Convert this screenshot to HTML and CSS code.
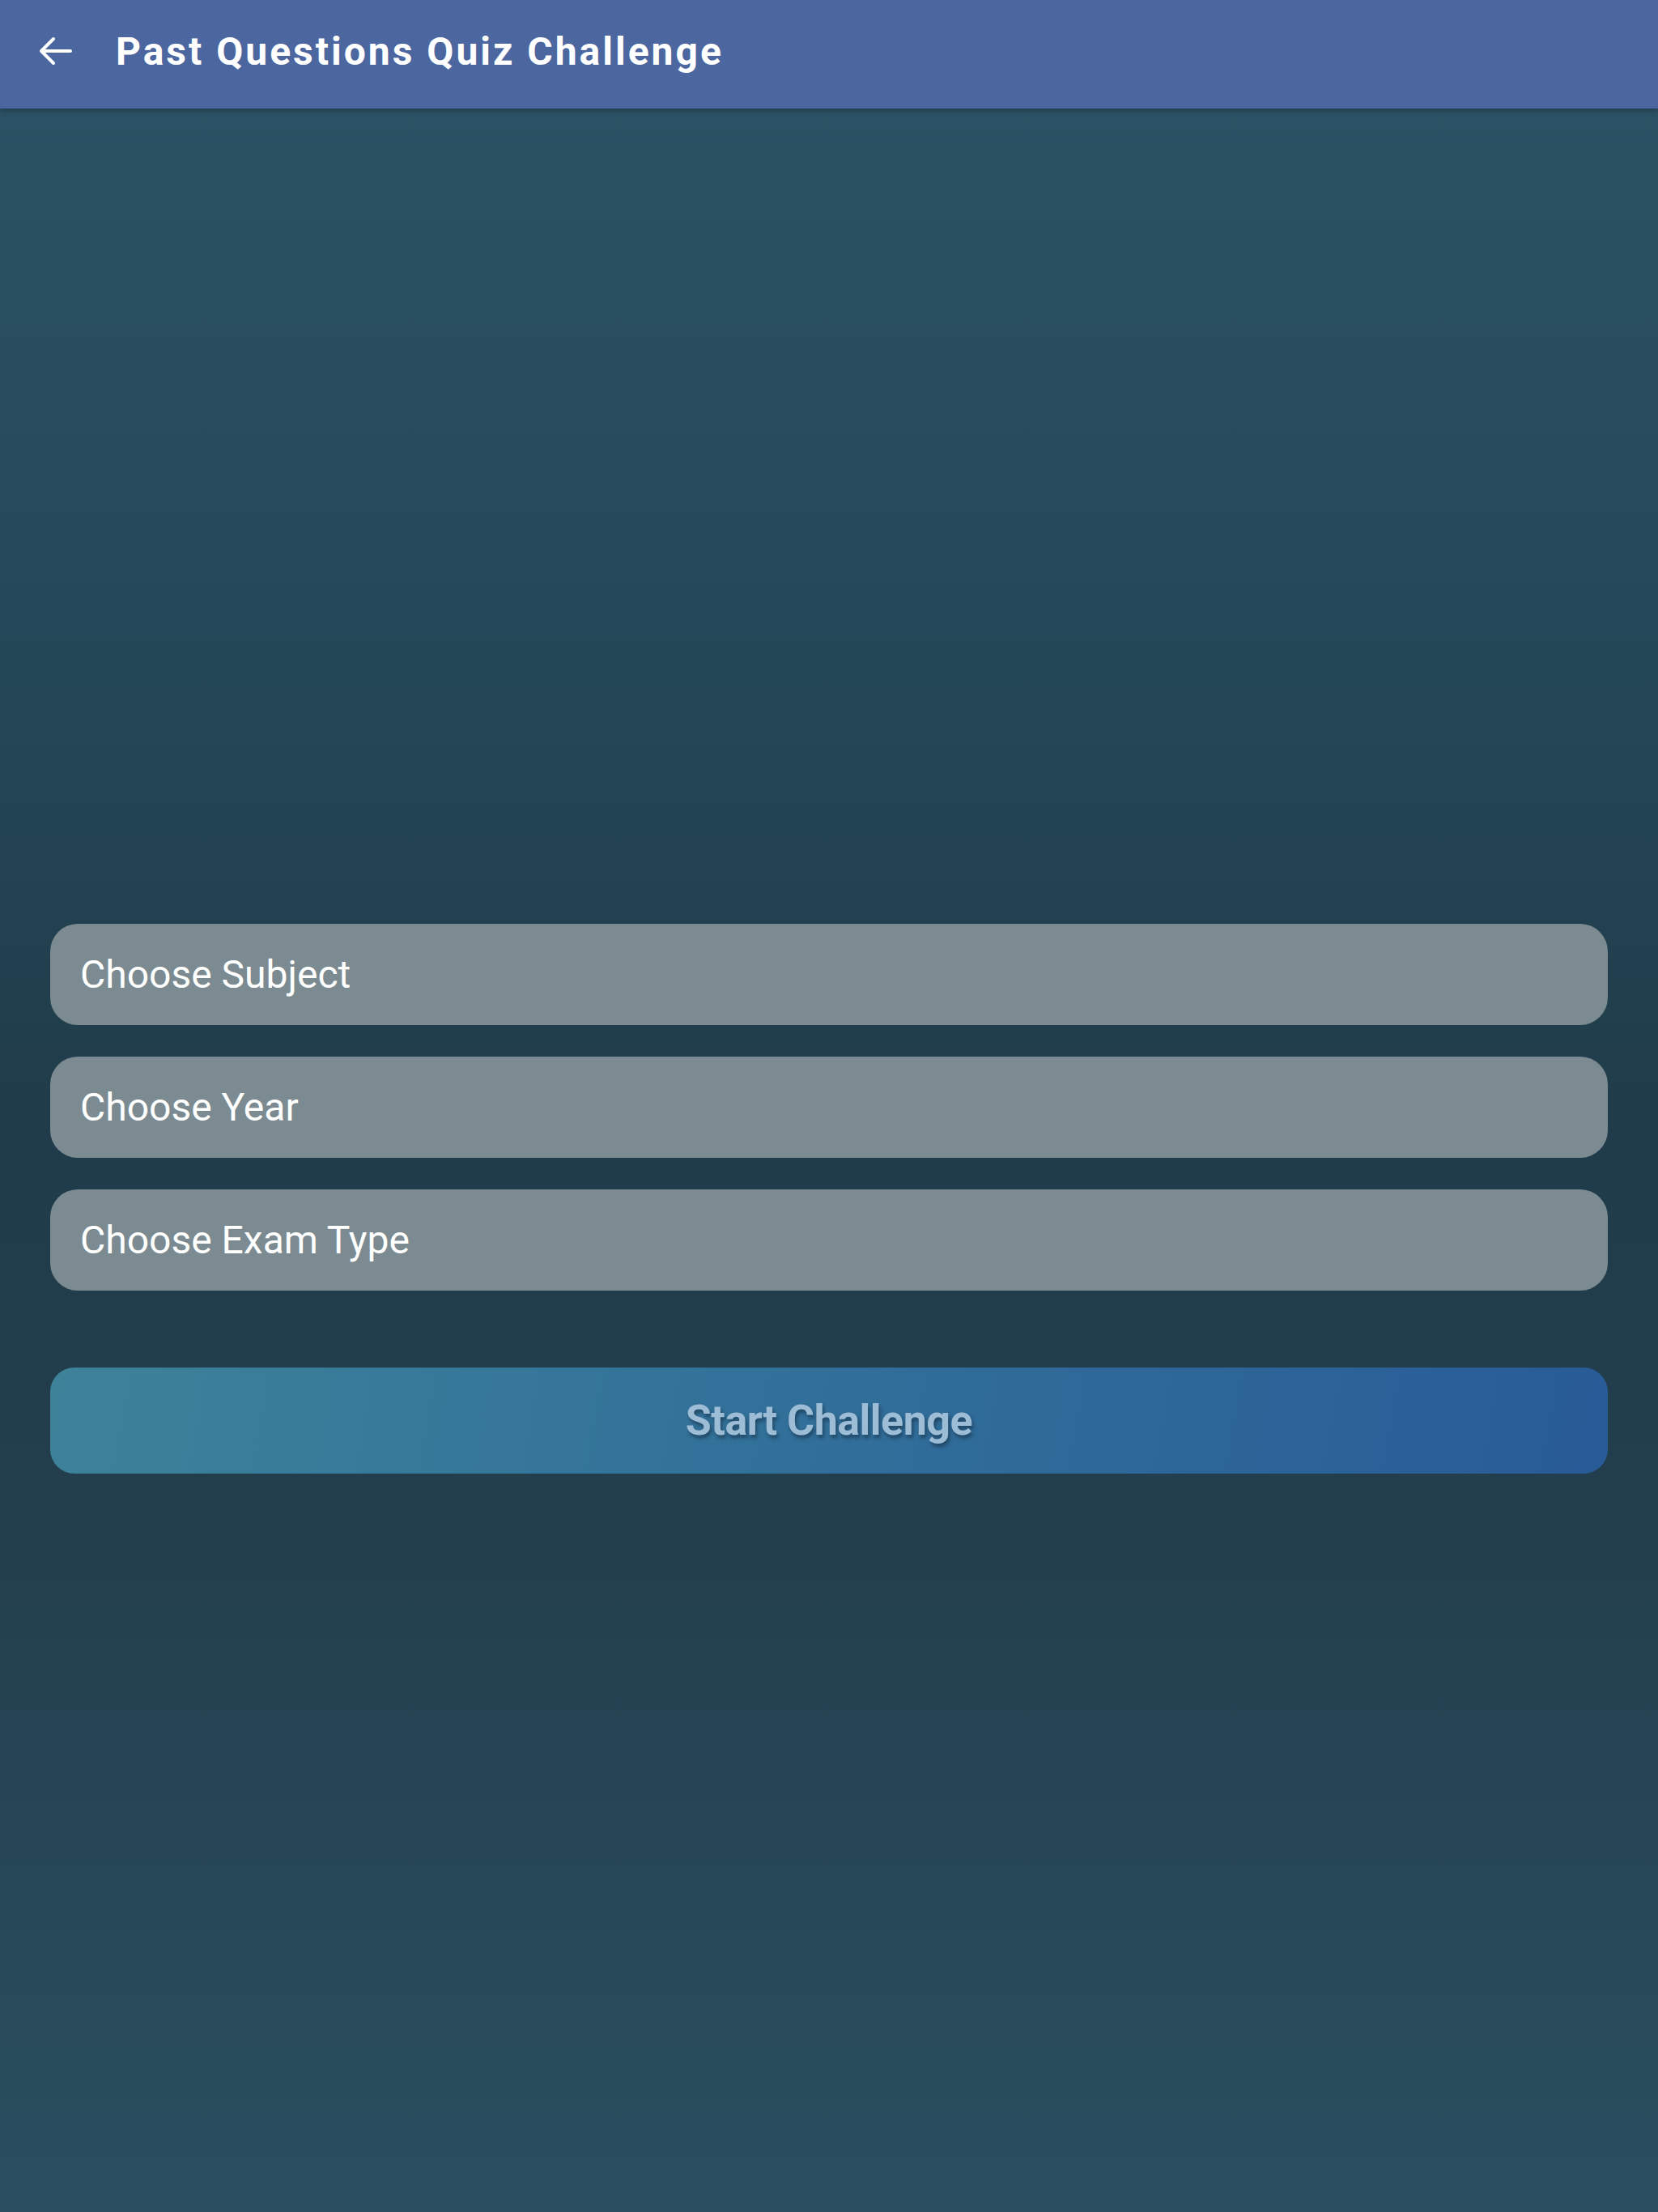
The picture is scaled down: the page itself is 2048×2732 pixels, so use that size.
FILE: index.html
```html
<!DOCTYPE html>
<html lang="en">
<head>
<meta charset="utf-8">
<title>Past Questions Quiz Challenge</title>
<link rel="stylesheet" href="styles.css">
</head>
<body>
<div class="app">
  <header class="topbar">
    <span class="back">
      <svg viewBox="0 0 42 36" width="42" height="36" aria-hidden="true">
        <path d="M40 18H4M19 3L4 18l15 15" fill="none" stroke="#ffffff" stroke-width="4" stroke-linecap="round" stroke-linejoin="round"/>
      </svg>
    </span>
    <h1 class="title">Past Questions Quiz Challenge</h1>
  </header>
  <main class="content">
    <div class="form">
      <div class="field">Choose Subject</div>
      <div class="field">Choose Year</div>
      <div class="field">Choose Exam Type</div>
      <button class="start">Start Challenge</button>
    </div>
  </main>
</div>
</body>
</html>
```
FILE: styles.css
```css
html, body {
  margin: 0;
  padding: 0;
}
body {
  font-family: Roboto, "Liberation Sans", sans-serif;
  background: #243f4d;
}
.app {
  display: flex;
  flex-direction: column;
  min-height: 2732px;
  background: linear-gradient(180deg, #2c5466 0%, #254a5b 25%, #203b49 52%, #233f4d 70%, #2a4f60 100%);
}
.topbar {
  height: 134px;
  box-sizing: border-box;
  display: flex;
  align-items: center;
  padding-left: 47px;
  padding-bottom: 8px;
  background: #4c67a0;
  box-shadow: 0 3px 6px rgba(0, 0, 0, 0.25);
  position: relative;
  z-index: 1;
}
.back {
  display: flex;
  width: 42px;
  height: 36px;
  margin-right: 54px;
}
.title {
  margin: 0;
  color: #ffffff;
  font-size: 48px;
  font-weight: 700;
  letter-spacing: 3px;
}
.content {
  flex: 1;
  padding: 1007px 62px 0;
}
.form {
  display: flex;
  flex-direction: column;
  gap: 39px;
}
.field {
  height: 125px;
  box-sizing: border-box;
  display: flex;
  align-items: center;
  padding-left: 37px;
  background: #7b8b91;
  border-radius: 34px;
  color: #ffffff;
  font-size: 48px;
}
.start {
  margin-top: 56px;
  height: 131px;
  border: none;
  border-radius: 30px;
  background: linear-gradient(100deg, #3d8299 0%, #32719a 45%, #285b97 100%);
  color: #9dbcd5;
  font-family: Roboto, "Liberation Sans", sans-serif;
  font-size: 52px;
  font-weight: 700;
  letter-spacing: -0.5px;
  text-shadow: 2px 4px 4px rgba(20, 40, 60, 0.55);
}
```
